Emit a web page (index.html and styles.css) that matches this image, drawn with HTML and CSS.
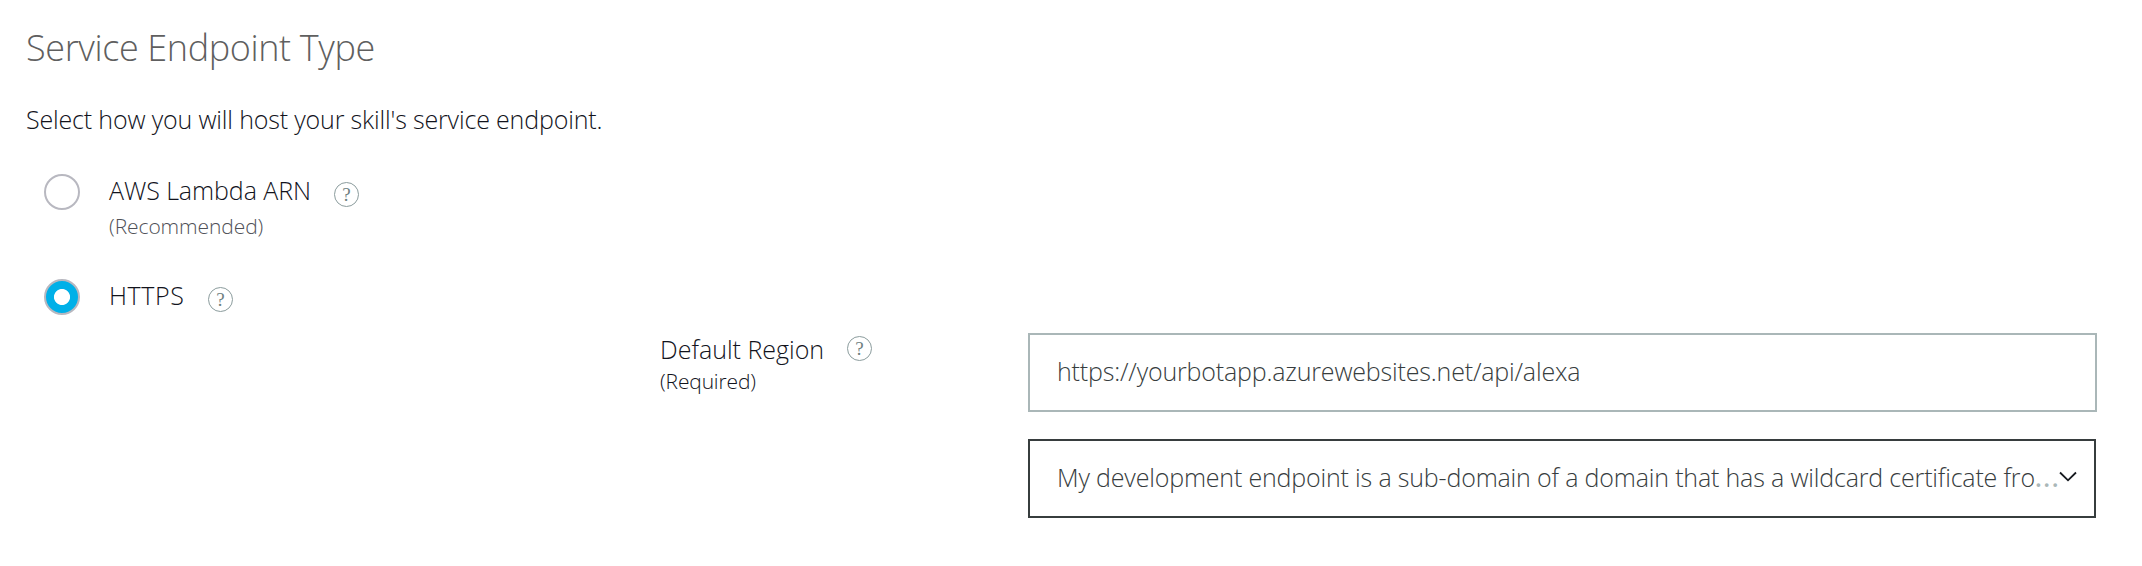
FILE: index.html
```html
<!DOCTYPE html>
<html lang="en">
<head>
<meta charset="utf-8">
<title>Service Endpoint Type</title>
<link rel="stylesheet" href="styles.css">
</head>
<body>
<main class="page">
  <h1 class="title">Service Endpoint Type</h1>
  <p class="intro">Select how you will host your skill's service endpoint.</p>

  <div class="option option-lambda">
    <span class="radio"></span>
    <div class="option-text">
      <div class="label-row"><span class="label label-lambda">AWS Lambda ARN</span><span class="help">?</span></div>
      <div class="note">(Recommended)</div>
    </div>
  </div>

  <div class="option option-https">
    <span class="radio radio-checked"></span>
    <div class="option-text">
      <div class="label-row"><span class="label label-https">HTTPS</span><span class="help">?</span></div>
    </div>
  </div>

  <section class="region">
    <div class="region-info">
      <div class="label-row"><span class="label label-region">Default Region</span><span class="help help-region">?</span></div>
      <div class="note note-required">(Required)</div>
    </div>
    <div class="fields">
      <div class="field field-url"><span class="value">https://yourbotapp.azurewebsites.net/api/alexa</span></div>
      <div class="field field-select">
        <span class="value">My development endpoint is a sub-domain of a domain that has a wildcard certificate fro</span><span class="dots">...</span>
        <svg class="chevron" width="18" height="12" viewBox="0 0 18 12"><path d="M1 1.5 9 9.3 17 1.5"/></svg>
      </div>
    </div>
  </section>
</main>
</body>
</html>
```
FILE: styles.css
```css
* { box-sizing: border-box; }

body {
  margin: 0;
  background: #fff;
  color: #12131c;
  font: 300 25px/34px "Open Sans", sans-serif;
  white-space: nowrap;
}

.page { height: 566px; padding: 24px 45px 0 26px; overflow: hidden; }

.title {
  margin: 0;
  color: #5f5f5f;
  font-size: 36px;
  font-weight: 300;
  line-height: 48px;
  letter-spacing: -0.38px;
}

.intro { margin: 30px 0 38px; letter-spacing: -0.16px; }

.option { display: flex; gap: 29px; padding-left: 18px; }
.option-lambda { height: 105px; }
.option-https { height: 54px; }

.radio {
  flex: none;
  width: 36px;
  height: 36px;
  border: 2px solid #b8b8c0;
  border-radius: 50%;
}
.radio-checked { background: radial-gradient(circle, #fff 7.6px, #00b0e8 8.4px); }

.option-text { margin-top: -1px; }
.label-row { display: flex; align-items: center; height: 34px; }
.label-lambda { width: 225px; letter-spacing: -0.08px; }
.label-https { width: 99px; letter-spacing: 0.6px; }
.label-region { width: 187px; }

.help {
  flex: none;
  width: 25px;
  height: 25px;
  margin-top: 8px;
  border: 1.5px solid #8b9c9d;
  border-radius: 50%;
  color: #6f8081;
  font: 19px/23px "Liberation Serif", serif;
  text-align: center;
}
.help-region { margin-top: -1px; }

.note { margin-top: 3px; color: #505157; font-size: 21px; line-height: 32px; letter-spacing: -0.08px; }

.region { display: flex; }
.region-info { flex: none; width: 1002px; margin-top: -1px; padding-left: 634px; }
.note-required { margin-top: -1px; color: #12131c; letter-spacing: -0.15px; }

.fields { flex: 1; min-width: 0; display: grid; grid-template-columns: minmax(0, 1fr); gap: 27px; }
.field {
  display: flex;
  align-items: center;
  height: 79px;
  padding: 0 17px 3px 27px;
  border: 2px solid #aab7b8;
  color: #373d3e;
  letter-spacing: -0.17px;
}
.value { flex: none; }
.field-select { margin-right: 1px; border-color: #373d3e; }
.dots { flex: 1; min-width: 0; color: #aab7b8; font-weight: 600; letter-spacing: 1.6px; }
.chevron { flex: none; fill: none; stroke: #16191f; stroke-width: 1.8; }
```
